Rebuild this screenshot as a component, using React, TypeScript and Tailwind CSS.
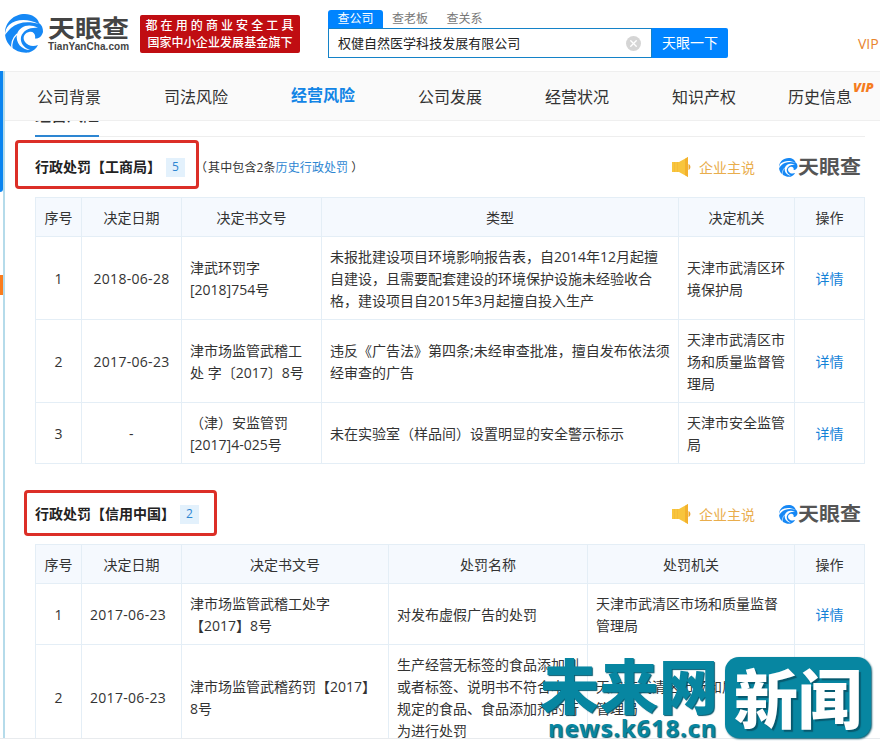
import { X } from "lucide-react";

const NAV = [
  { name: "公司背景" },
  { name: "司法风险" },
  { name: "经营风险", active: true },
  { name: "公司发展" },
  { name: "经营状况" },
  { name: "知识产权" },
];

type Row = { no: string; date: string; cells: string[][] };

const BUREAU_HEAD = ["序号", "决定日期", "决定书文号", "类型", "决定机关", "操作"];
const BUREAU_ROWS: Row[] = [
  { no: "1", date: "2018-06-28", cells: [["津武环罚字", "[2018]754号"], ["未报批建设项目环境影响报告表，自2014年12月起擅", "自建设，且需要配套建设的环境保护设施未经验收合", "格，建设项目自2015年3月起擅自投入生产"], ["天津市武清区环", "境保护局"]] },
  { no: "2", date: "2017-06-23", cells: [["津市场监管武稽工", "处 字〔2017〕8号"], ["违反《广告法》第四条;未经审查批准，擅自发布依法须", "经审查的广告"], ["天津市武清区市", "场和质量监督管", "理局"]] },
  { no: "3", date: "-", cells: [["（津）安监管罚", "[2017]4-025号"], ["未在实验室（样品间）设置明显的安全警示标示"], ["天津市安全监管", "局"]] },
];

const CREDIT_HEAD = ["序号", "决定日期", "决定书文号", "处罚名称", "处罚机关", "操作"];
const CREDIT_ROWS: Row[] = [
  { no: "1", date: "2017-06-23", cells: [["津市场监管武稽工处字", "【2017】8号"], ["对发布虚假广告的处罚"], ["天津市武清区市场和质量监督", "管理局"]] },
  { no: "2", date: "2017-06-23", cells: [["津市场监管武稽药罚【2017】", "8号"], ["生产经营无标签的食品添加剂", "或者标签、说明书不符合本法", "规定的食品、食品添加剂的行", "为进行处罚"], ["天津市武清区市场和质量监督", "管理局"]] },
];

export default function App() {
  return (
    <div className="relative h-[741px] w-[880px] overflow-hidden bg-white font-['Open_Sans','Noto_Sans_CJK_SC',sans-serif] text-[14px] leading-[22px] text-[#333]">
      <Header />
      <div className="flex h-[668px] overflow-hidden border-b border-[#e8ebee]">
        <div className="flex w-[5px] shrink-0 border-r-2 border-[#b5dbea]">
          <div className="w-[3px]">
            <div className="h-[121px] rounded-br-[3px] bg-[#0a84f0]" />
            <div className="mt-[83px] h-5 bg-[#fa7d1e]" />
          </div>
        </div>
        <div className="min-w-0 flex-1">
          <Nav />
          <main className="ml-[30px] w-[830px]">
            <div className="h-4 border-b border-[#eeeeee]">
              <div className="flex h-4 w-16 items-end overflow-hidden border-b-2 border-[#2d86d2]">
                <div className="mb-[10px] flex h-[4px] items-end overflow-hidden text-[16px] font-medium leading-[20px]">经营风险</div>
              </div>
            </div>
            <Title text="行政处罚【工商局】" count="5" box="w-[184px] h-[49px] -ml-5 pl-[17px] pt-[5px]" top="mt-[3px] h-[49px]" inner="pt-[5px]">
              <span className="-ml-[4px] pt-[6px] text-[12px] tracking-[0.1px]">（<span className="pl-px">其中包含2条</span><span className="text-[#2d86d2]">历史行政处罚</span><span className="pl-[3px]">）</span></span>
            </Title>
            <Table head={BUREAU_HEAD} rows={BUREAU_ROWS} cols="grid-cols-[46px_100px_140px_357px_116px_70px]" gap="mt-2" centerDate />
            <Title text="行政处罚【信用中国】" count="2" box="w-[193px] h-[46px] -ml-[11px] pl-[8px] pt-[2px]" top="mt-[26px] h-[46px]" inner="pt-[2px]" />
            <Table head={CREDIT_HEAD} rows={CREDIT_ROWS} cols="grid-cols-[46px_100px_207px_199px_207px_70px]" gap="mt-2" />
          </main>
        </div>
      </div>
      <Watermark />
    </div>
  );
}

function Header() {
  return (
    <header className="flex h-[71px] items-start">
      <div className="flex w-[140px] pl-[5px] pt-[14px]">
        <Swirl className="h-[39px] w-[39px]" />
        <div className="ml-[4px] w-[82px]">
          <div className="h-[27px] origin-bottom scale-y-90 whitespace-nowrap text-[27px] font-bold leading-[25px] text-[#444]">天眼查</div>
          <div className="whitespace-nowrap font-['Liberation_Sans',sans-serif] text-[10px] font-bold leading-[12px] tracking-[0.05px] text-[#444]">TianYanCha.com</div>
        </div>
      </div>
      <div className="mt-[15px] flex h-[38px] w-[160px] flex-col items-center justify-center whitespace-nowrap rounded-[2px] bg-[#c00d12] font-medium text-white">
        <div className="pl-[2px] text-[12px] leading-[17px] tracking-[3.1px]">都在用的商业安全工具</div>
        <div className="text-[12px] leading-[17px] tracking-[0.1px]">国家中小企业发展基金旗下</div>
      </div>
      <div className="ml-7 mt-[10px] w-[400px]">
        <div className="flex h-[18px] text-[12px] leading-[18px] text-[#777]">
          <div className="w-[55px] rounded-t-[3px] bg-[#0084ff] text-center text-white">查公司</div>
          <div className="w-[54px] text-center">查老板</div>
          <div className="w-[55px] text-center">查关系</div>
        </div>
        <div className="flex h-[30px]">
          <div className="flex w-[324px] items-center justify-between border border-[#1482c8] pl-[9px] pr-[10px] text-[13px]">
            <span className="tracking-[0.02px] text-[#222]">权健自然医学科技发展有限公司</span>
            <span className="flex h-[15px] w-[15px] items-center justify-center rounded-full bg-[#d5d5d5] text-white"><X className="h-[11px] w-[11px]" strokeWidth={3} /></span>
          </div>
          <button className="w-[76px] rounded-r-[2px] bg-[#0084ff] text-[14px] text-white">天眼一下</button>
        </div>
      </div>
      <div className="ml-[130px] mt-[33px] text-[14px] text-[#e8842d]">VIP</div>
    </header>
  );
}

function Nav() {
  return (
    <nav className="flex h-[50px] items-center border-y border-[#efefef] bg-[#fafafa] pl-8 text-[16px] text-[#333]">
      {NAV.map(n => (
        <div key={n.name} className={n.active ? "w-[127px] shrink-0 pb-[2px] font-bold text-[#1285e6]" : "w-[127px] shrink-0 pt-[2px]"}>{n.name}</div>
      ))}
      <div className="relative -ml-[11px] shrink-0 pt-[2px]">
        历史信息
        <span className="absolute -top-[6px] left-[65px] text-[13px] font-extrabold italic leading-[18px] text-[#f57c1f]">VIP</span>
      </div>
    </nav>
  );
}

function Title({ text, count, box, top, inner, children }: { text: string; count: string; box: string; top: string; inner: string; children?: React.ReactNode }) {
  return (
    <div className={`flex items-center ${top}`}>
      <div className={`flex shrink-0 items-center rounded-[4px] border-[3px] border-[#dc2f27] ${box}`}>
        <h2 className="whitespace-nowrap text-[14px] font-bold text-[#222]">{text}</h2>
        <span className="ml-[5px] flex h-[19px] w-[19px] items-center justify-center bg-[#e3f1fc] text-[12px] text-[#2d86d2]">{count}</span>
      </div>
      {children}
      <div className={`ml-auto flex items-center pr-[4px] ${inner}`}>
        <Horn />
        <span className="ml-2 pt-[2px] text-[14px] text-[#e9ad4c]">企业主说</span>
        <Swirl className="ml-6 h-[19px] w-[19px]" />
        <span className="w-[63px] scale-y-90 whitespace-nowrap text-[21px] font-bold text-[#555]">天眼查</span>
      </div>
    </div>
  );
}

function Table({ head, rows, cols, gap, centerDate = false }: { head: string[]; rows: Row[]; cols: string; gap: string; centerDate?: boolean }) {
  const cell = "flex border-b border-r border-[#e4eef6] px-2 pt-[9px] pb-[7px] items-center";
  return (
    <div className={`border-l border-t border-[#e4eef6] ${gap}`}>
      <div className={`grid bg-[#f5f9fe] ${cols}`}>
        {head.map(h => <div key={h} className={`${cell} justify-center`}>{h}</div>)}
      </div>
      {rows.map(r => (
        <div key={r.no} className={`grid ${cols}`}>
          <div className={`${cell} justify-center`}>{r.no}</div>
          <div className={`${cell} tracking-[0.3px] ${centerDate ? "justify-center" : ""}`}>{r.date}</div>
          {r.cells.map((lines, i) => (
            <div key={i} className={cell}>
              <div className="whitespace-nowrap">{lines.map(l => <div key={l}>{l}</div>)}</div>
            </div>
          ))}
          <div className={`${cell} justify-center text-[#1482d8]`}>详情</div>
        </div>
      ))}
    </div>
  );
}

function Swirl({ className }: { className: string }) {
  return (
    <svg viewBox="0 0 39 39" className={className}>
      <path d="M24 38.500C11 40 0 31 0 19C0 8 9 0 20 0C27 0 33 4 34 9C37 11 38 14 38 18C37 22 34 25 30 24.500C31 20 28 17 24 18C19 19 17 24 20 28C23 32 28 33 33 31C31 35 28 37 24 38.500Z" fill="#1688f5" />
      <path d="M4 11C11 5 22 4 34 10C23 7 13 8 6 14C4 16 2 18 0 21C0 17 1 14 4 11Z" fill="#fff" />
      <path d="M12 20C15 12 24 9 33 14C26 13 18 16 16 23C15 29 19 34 25 36C17 36 10 29 12 20Z" fill="#fff" />
      <path d="M12 20C8 24 6 29 7 35" fill="none" stroke="#fff" strokeWidth="1.2" />
    </svg>
  );
}

function Horn() {
  return (
    <svg viewBox="0 0 19 20" className="h-5 w-[19px]">
      <path d="M0 5H7L16 0V20L7 15H0Z" fill="#f8c53d" />
      <path d="M13 2L16 0V20L13 18Z" fill="#f3b12d" />
      <path d="M16.500 7C19 8 19 12 16.500 13Z" fill="#eca32c" />
      <path d="M2.500 5V15M5.500 5V15" stroke="#f5bc38" strokeWidth="1" />
    </svg>
  );
}

function Watermark() {
  return (
    <div className="absolute left-[540px] top-[657px] flex h-[81px] w-[332px] whitespace-nowrap font-['Noto_Sans_CJK_SC',sans-serif] font-black">
      <div className="w-[185px] text-[#0786a1] [text-shadow:1px_1px_1px_#07596e]">
        <div className="h-[62px] text-[59px] leading-[54px] tracking-[0.5px]">未来网</div>
        <div className="pl-[8px] font-['Noto_Sans',sans-serif] text-[24px] font-bold leading-[18px] tracking-[0.8px]">news.k618.cn</div>
      </div>
      <div className="flex h-[81px] w-[146px] items-center justify-center rounded-[14px] bg-[#0786a1] text-[64px] leading-[78px] text-white shadow-[1px_1px_2px_#07596e] [text-shadow:2px_2px_1px_#07596e]">
        <div className="-mt-[6px]">新闻</div>
      </div>
    </div>
  );
}
